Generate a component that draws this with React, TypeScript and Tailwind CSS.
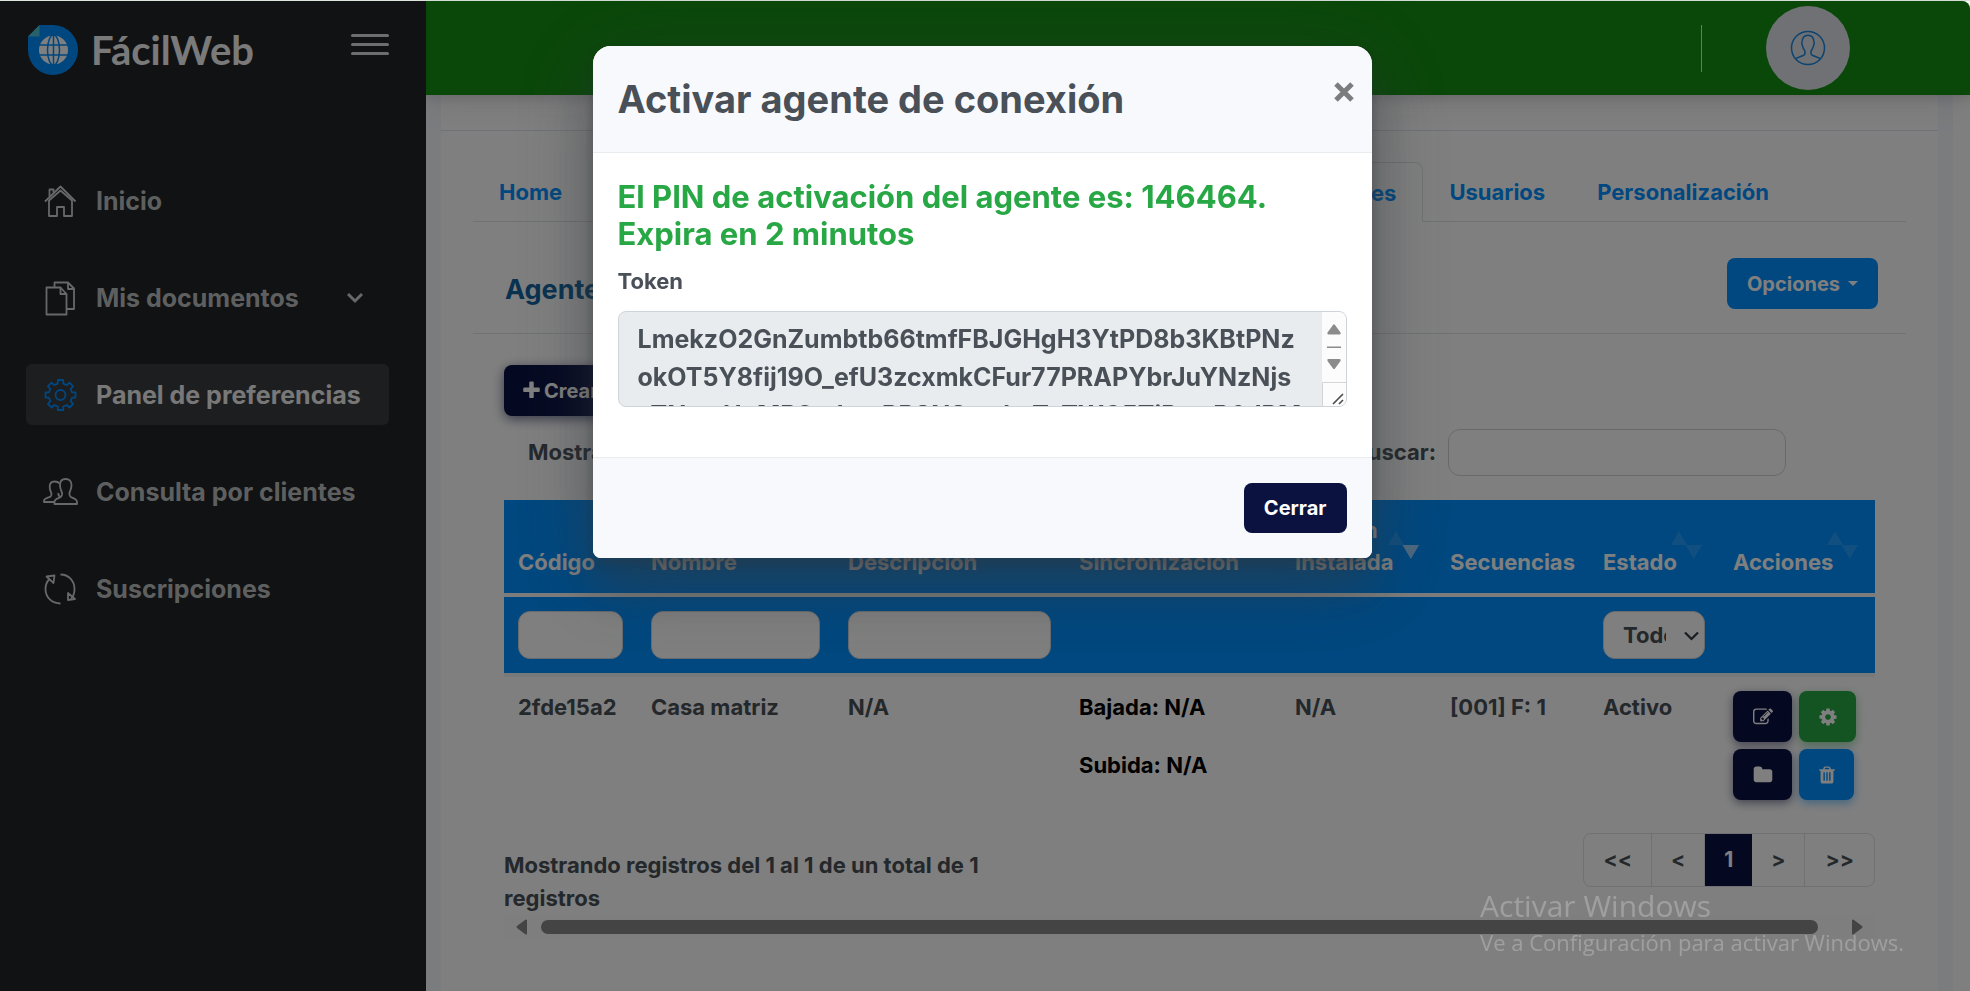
/**
 * Agents page of the preferences panel, with the activation modal open
 */

import { useState } from 'react';
import type { ReactNode } from 'react';

const TOKEN =
  'LmekzO2GnZumbtb66tmfFBJGHgH3YtPD8b3KBtPNzokOT5Y8fij19O_efU3zcxmkCFur77PRAPYbrJuYNzNjseTNuwHoMB3cdmpRR8N8pwhzTuTWC5TiPxwR6dRM48OlTQ';

// Font Awesome 4 glyphs, 1792 grid
const FA_PATHS = {
  plus: 'M1600 736v192q0 40-28 68t-68 28h-416v416q0 40-28 68t-68 28h-192q-40 0-68-28t-28-68v-416h-416q-40 0-68-28t-28-68v-192q0-40 28-68t68-28h416v-416q0-40 28-68t68-28h192q40 0 68 28t28 68v416h416q40 0 68 28t28 68z',
  edit: 'M888 1184l116-116-152-152-116 116v56h96v96h56zm440-720q-16-16-33 1l-350 350q-17 17-1 33t33-1l350-350q17-17 1-33zm80 594v190q0 119-84.500 203.500t-203.500 84.500h-832q-119 0-203.500-84.500t-84.500-203.500v-832q0-119 84.500-203.500t203.500-84.500h832q63 0 117 25 15 7 18 23 3 17-9 29l-49 49q-14 14-32 8-23-6-45-6h-832q-66 0-113 47t-47 113v832q0 66 47 113t113 47h832q66 0 113-47t47-113v-126q0-13 9-22l64-64q15-15 35-7t20 29zm-96-738l288 288-672 672h-288v-288zm444 132l-92 92-288-288 92-92q28-28 68-28t68 28l152 152q28 28 28 68t-28 68z',
  cog: 'M1152 896q0-106-75-181t-181-75-181 75-75 181 75 181 181 75 181-75 75-181zm512-109v222q0 12-8 23t-20 13l-185 28q-19 54-39 91 35 50 107 138 10 12 10 25t-9 23q-27 37-99 108t-94 71q-12 0-26-9l-138-108q-44 23-91 38-16 136-29 186-7 28-36 28h-222q-14 0-24.500-8.500t-11.500-21.500l-28-184q-49-16-90-37l-141 107q-10 9-25 9-14 0-25-11-126-114-165-168-7-10-7-23 0-12 8-23 15-21 51-66.500t54-70.500q-27-50-41-99l-183-27q-13-2-21-12.500t-8-23.500v-222q0-12 8-23t19-13l186-28q14-46 39-92-40-57-107-138-10-12-10-24 0-10 9-23 26-36 98.500-107.500t94.500-71.500q13 0 26 10l138 107q44-23 91-38 16-136 29-186 7-28 36-28h222q14 0 24.500 8.500t11.500 21.500l28 184q49 16 90 37l142-107q9-9 24-9 13 0 25 10 129 119 165 170 7 8 7 22 0 12-8 23-15 21-51 66.500t-54 70.500q26 50 41 98l183 28q13 2 21 12.500t8 23.500z',
  folder: 'M1728 608v704q0 92-66 158t-158 66h-1216q-92 0-158-66t-66-158v-960q0-92 66-158t158-66h320q92 0 158 66t66 158v32h672q92 0 158 66t66 158z',
  trash: 'M704 1376v-704q0-14-9-23t-23-9h-64q-14 0-23 9t-9 23v704q0 14 9 23t23 9h64q14 0 23-9t9-23zm256 0v-704q0-14-9-23t-23-9h-64q-14 0-23 9t-9 23v704q0 14 9 23t23 9h64q14 0 23-9t9-23zm256 0v-704q0-14-9-23t-23-9h-64q-14 0-23 9t-9 23v704q0 14 9 23t23 9h64q14 0 23-9t9-23zm-544-992h448l-48-117q-7-9-17-11h-317q-10 2-17 11zm928 32v64q0 14-9 23t-23 9h-96v948q0 83-47 143.500t-113 60.500h-832q-66 0-113-58.500t-47-141.500v-952h-96q-14 0-23-9t-9-23v-64q0-14 9-23t23-9h309l70-167q15-37 54-63t79-26h320q40 0 79 26t54 63l70 167h309q14 0 23 9t9 23z',
};

function FaIcon({ name, size = 20 }: { name: keyof typeof FA_PATHS; size?: number }) {
  return (
    <svg width={size} height={size} viewBox="0 0 1792 1792" fill="currentColor" aria-hidden="true">
      <path d={FA_PATHS[name]} />
    </svg>
  );
}

// Thin outline icons of the side menu
function LineIcon({ children }: { children: ReactNode }) {
  return (
    <svg
      width="36"
      height="36"
      viewBox="0 0 36 36"
      fill="none"
      stroke="currentColor"
      strokeWidth="1.8"
      strokeLinejoin="round"
      aria-hidden="true"
    >
      {children}
    </svg>
  );
}

const homeIcon = (
  <LineIcon>
    <path d="M3 18.500 18.500 3.500l15 15" />
    <path d="M7 17.500v15.500h8V24h7v9h8V17.500L18.500 7.500z" />
    <path d="M7.500 13.500V6.500h4v3" />
  </LineIcon>
);

const filesIcon = (
  <LineIcon>
    <path d="M4.500 7.500h14l6 6.500v20.500h-20z" />
    <path d="M18.500 7.500V14h6" />
    <path d="M12.500 7.500V2.500h13.500L32 8.500V29h-7.500" />
    <path d="M26 2.500v6.500h6" />
  </LineIcon>
);

const gearIcon = (
  <LineIcon>
    <circle cx="18.500" cy="18" r="5" />
    <path d="M15.800 3h5.400v3.600l3.600 1.500 2.700-2.500 3.600 3.700-2.500 2.700 1.500 3.400h3.400v5.200h-3.400l-1.500 3.600 2.500 2.600-3.600 3.700-2.700-2.500-3.600 1.500V33h-5.400v-3.500l-3.600-1.500-2.700 2.500-3.600-3.700 2.500-2.600-1.500-3.600H3.500v-5.200h3.400l1.500-3.400-2.500-2.700 3.600-3.700 2.700 2.500 3.600-1.500z" />
  </LineIcon>
);

const usersIcon = (
  <LineIcon>
    <path d="M23.500 5c-3.500 0-5.500 2.300-5.500 6 0 4 1.200 5.500 2 7.500.5 3-.3 4.300-2.500 5.200-3 1.200-5 1.800-5 4.300v2h22.500v-2c0-2.500-2-3.100-5-4.300-2.400-1-3-2.200-2.500-5.200.8-2 2-3.500 2-7.500 0-3.700-2-6-6-6z" />
    <path d="M17.500 9.500C16.500 8.200 14.500 7.500 12.500 7.500 9.500 7.500 7.700 9.500 7.700 12.700c0 3.400 1 4.700 1.600 6.400.5 2.600 0 3.200-2 4-3 1.100-5.300 1.700-5.300 3.800V28h10.500" />
    <path d="M16.500 19c-.6 2.300.4 3.200 2 3.800" />
  </LineIcon>
);

const refreshIcon = (
  <LineIcon>
    <path d="M18.500 3.500c8 0 14 6.200 14 14.500 0 4-1.200 7.500-3.500 10" />
    <path d="M26 22v7l7-1z" />
    <path d="M18.500 32.500C10 32.500 3.500 26.500 3.500 18c0-4 1.500-7.500 4-10" />
    <path d="M4.500 5.500l8-1-1 7.500z" />
  </LineIcon>
);

const menuItems = [
  { label: 'Inicio', icon: homeIcon },
  { label: 'Mis documentos', icon: filesIcon, hasChildren: true },
  { label: 'Panel de preferencias', icon: gearIcon, active: true },
  { label: 'Consulta por clientes', icon: usersIcon },
  { label: 'Suscripciones', icon: refreshIcon },
];

function Logo() {
  return (
    <a href="#" className="flex items-center gap-[13px]">
      <svg width="50" height="50" viewBox="0 0 50 50" aria-hidden="true">
        <path d="M11.500 0H26a25 25 0 1 1-26 25V11.500z" fill="#008cff" />
        <path d="M11.500 0v11.500H0z" fill="#4fc3d5" />
        <circle cx="25.500" cy="25" r="14.500" fill="#fff" />
        <g fill="none" stroke="#008cff" strokeWidth="1.500">
          <ellipse cx="25.500" cy="25" rx="6" ry="15" />
          <path d="M25.500 10v30M10 20h31M10 30h31" />
        </g>
      </svg>
      <span className="font-[Lato,sans-serif] text-[40px] leading-[50px] font-bold text-[#f4f4f4]">FácilWeb</span>
    </a>
  );
}

function Sidebar() {
  return (
    <aside className="relative z-20 w-[426px] shrink-0 bg-[#212428]">
      <div className="flex h-[94px] items-center justify-between pt-1 pr-[37px] pl-7">
        <Logo />
        <button type="button" aria-label="Menú" className="mb-3 flex w-[38px] flex-col gap-[6px]">
          <span className="h-[3px] rounded-full bg-[#dcdcdc]" />
          <span className="h-[3px] rounded-full bg-[#dcdcdc]" />
          <span className="h-[3px] rounded-full bg-[#dcdcdc]" />
        </button>
      </div>
      <nav className="mt-[75px] flex flex-col gap-9 pr-[37px] pl-[26px]">
        {menuItems.map(item => (
          <a
            key={item.label}
            href="#"
            className={`flex h-[61px] items-center gap-[18px] rounded-md pr-[26px] pl-4 text-[25px] leading-8 ${
              item.active ? 'bg-[#3a3c3f] text-[#f0f0f0]' : 'text-[#bdbebf]'
            }`}
          >
            <span className={item.active ? 'text-[#008cff]' : 'text-[#d0d1d2]'}>{item.icon}</span>
            <span className="flex-1">{item.label}</span>
            {item.hasChildren && (
              <svg width="16" height="16" viewBox="0 0 16 16" fill="none" stroke="#d0d1d2" strokeWidth="3" aria-hidden="true">
                <path d="M1 4l7 7 7-7" />
              </svg>
            )}
          </a>
        ))}
      </nav>
    </aside>
  );
}

function TopBar() {
  return (
    <header className="relative z-10 flex h-[94px] items-center justify-end gap-16 rounded-tr-lg bg-[#149012] pr-[120px] shadow-[0_8px_35px_rgba(4,9,20,0.08),0_4px_12px_rgba(4,9,20,0.12)]">
      <span className="h-[47px] w-px bg-[#e4e4e4]" />
      <button type="button" aria-label="Cuenta" className="flex size-[84px] items-center justify-center rounded-full bg-[#e0e3e8]">
        <svg width="36" height="36" viewBox="0 0 36 36" fill="none" stroke="#1a86e0" strokeWidth="1.500" aria-hidden="true">
          <circle cx="18" cy="18" r="16.500" />
          <path d="M5.800 29c1.500-1.600 4-2.400 7.500-3.500 1.800-.6 2-1.700 1.700-4.200-.6-1.600-2.300-3.300-2.500-5.500-.4-.8-.9-1.600-.6-3 .2-5 2.600-7.600 6.100-7.600s5.900 2.600 6.100 7.600c.3 1.400-.2 2.200-.6 3-.2 2.200-1.900 3.900-2.500 5.500-.3 2.500-.1 3.600 1.700 4.200 3.500 1.100 6 1.900 7.500 3.500" />
        </svg>
      </button>
    </header>
  );
}

function SortArrows({ desc = false }: { desc?: boolean }) {
  return (
    <svg
      width="31"
      height="28"
      viewBox="0 0 31 28"
      fill="#fff"
      className="absolute right-[17px] bottom-[34px]"
      aria-hidden="true"
    >
      <path d="M0 14 8 0l8 14z" fillOpacity="0.13" />
      <path d="M14.500 14h16.500l-8.200 14z" fillOpacity={desc ? 0.6 : 0.13} />
    </svg>
  );
}

const columns = [
  { label: 'Código', width: 133 },
  { label: 'Nombre', width: 197 },
  { label: 'Descripción', width: 231 },
  { label: 'Sincronización', width: 216 },
  { label: 'Versión Instalada', width: 155, sort: 'desc' },
  { label: 'Secuencias', width: 153 },
  { label: 'Estado', width: 130, sort: 'none' },
  { label: 'Acciones', width: 156, sort: 'none' },
];

const filterClass = 'block h-12 w-full rounded-xl border border-[#ced4da] bg-white';

function AgentsTable() {
  return (
    <table className="mt-6 w-full table-fixed border-collapse text-left">
      <colgroup>
        {columns.map(col => (
          <col key={col.label} style={{ width: col.width }} />
        ))}
      </colgroup>
      <thead className="bg-[#0090ff] text-white">
        <tr className="h-[95px]">
          {columns.map(col => (
            <th key={col.label} scope="col" className="relative px-[14px] pb-[15px] align-bottom leading-8">
              {col.label}
              {col.sort && <SortArrows desc={col.sort === 'desc'} />}
            </th>
          ))}
        </tr>
        <tr className="h-20 border-t-4 border-b-4 border-t-[#f8f9fa] border-b-[#f1f2f3]">
          <td className="px-[14px]"><input type="text" aria-label="Filtrar código" className={filterClass} /></td>
          <td className="px-[14px]"><input type="text" aria-label="Filtrar nombre" className={filterClass} /></td>
          <td className="px-[14px]"><input type="text" aria-label="Filtrar descripción" className={filterClass} /></td>
          <td />
          <td />
          <td />
          <td className="px-[14px]">
            <div className="relative">
              <select
                aria-label="Filtrar estado"
                className="block h-12 w-full appearance-none rounded-xl border border-[#ced4da] bg-white pr-[38px] pl-[19px] text-[#495057]"
              >
                <option>Todos</option>
                <option>Activo</option>
              </select>
              <svg
                width="15"
                height="10"
                viewBox="0 0 15 10"
                fill="none"
                stroke="#343a40"
                strokeWidth="2.200"
                className="pointer-events-none absolute top-5 right-[6px]"
                aria-hidden="true"
              >
                <path d="M1 1.500l6.500 6.500L14 1.500" />
              </svg>
            </div>
          </td>
          <td />
        </tr>
      </thead>
      <tbody>
        <tr className="align-top leading-[33px]">
          <td className="px-[14px] py-[14px]">2fde15a2</td>
          <td className="px-[14px] py-[14px]">Casa matriz</td>
          <td className="px-[14px] py-[14px]">N/A</td>
          <td className="px-[14px] py-[14px] text-black">
            <p className="mb-[25px]">Bajada: N/A</p>
            <p>Subida: N/A</p>
          </td>
          <td className="px-[14px] py-[14px]">N/A</td>
          <td className="px-[14px] py-[14px]">[001] F: 1</td>
          <td className="px-[14px] py-[14px]">Activo</td>
          <td className="px-[14px] py-[14px]">
            <div className="flex flex-wrap gap-[7px] text-white">
              <button type="button" aria-label="Editar" className="flex h-[51px] w-[59px] items-center justify-center rounded-lg bg-[#0a1142] shadow-[0_3px_10px_rgba(10,17,66,0.5)]">
                <FaIcon name="edit" />
              </button>
              <button type="button" aria-label="Configurar" className="flex h-[51px] w-[57px] items-center justify-center rounded-lg bg-[#28a745] shadow-[0_3px_10px_rgba(40,167,69,0.5)]">
                <FaIcon name="cog" />
              </button>
              <button type="button" aria-label="Archivos" className="flex h-[51px] w-[59px] items-center justify-center rounded-lg bg-[#0a1142] shadow-[0_3px_10px_rgba(10,17,66,0.5)]">
                <FaIcon name="folder" />
              </button>
              <button type="button" aria-label="Eliminar" className="flex h-[51px] w-[55px] items-center justify-center rounded-lg bg-[#0090ff] shadow-[0_3px_10px_rgba(0,144,255,0.5)]">
                <FaIcon name="trash" />
              </button>
            </div>
          </td>
        </tr>
      </tbody>
    </table>
  );
}

function Pagination() {
  const pageClass = 'flex h-[52px] items-center border-r border-[#dee2e6] px-[19px]';
  return (
    <nav aria-label="Páginas" className="flex overflow-hidden rounded-lg border border-[#dee2e6] text-[21px]">
      <button type="button" className={pageClass}>&lt;&lt;</button>
      <button type="button" className={pageClass}>&lt;</button>
      <button type="button" aria-current="page" className="flex h-[52px] items-center bg-[#0a1142] px-[19px] text-white">1</button>
      <button type="button" className={pageClass}>&gt;</button>
      <button type="button" className="flex h-[52px] items-center px-5">&gt;&gt;</button>
    </nav>
  );
}

function HorizontalScroll() {
  return (
    <div className="flex h-[23px] items-center bg-[#fcfcfc] px-3 text-[#888]">
      <svg width="12" height="16" viewBox="0 0 12 16" fill="currentColor" aria-hidden="true">
        <path d="M11 1v14q-1 1-2 0L1 9q-1-1 0-2L9 1q1-1 2 0z" />
      </svg>
      <span className="mr-[33px] ml-[13px] h-[14px] flex-1 rounded-full bg-[#888]" />
      <svg width="12" height="16" viewBox="0 0 12 16" fill="currentColor" aria-hidden="true">
        <path d="M1 1v14q1 1 2 0l8-6q1-1 0-2L3 1Q2 0 1 1z" />
      </svg>
    </div>
  );
}

function AgentsPage() {
  const tabClass = 'block h-[59px] px-[26px] leading-[60px]';
  return (
    <main className="flex-1 border-r-[17px] border-white bg-[#f5f8fd] px-[15px]">
      <div className="min-h-full bg-white">
        <div className="h-9 border-b border-[#dfe6f0]" />
        <div className="px-8 pt-[31px]">
          <ul className="flex border-b border-[#dee2e6] pr-[111px] text-[#0090ff]">
            <li><a href="#" className={tabClass}>Home</a></li>
            <li className="-mb-px ml-auto rounded-t-lg border border-b-0 border-[#dee2e6] bg-white">
              <a href="#" className={tabClass}>Agentes</a>
            </li>
            <li><a href="#" className={tabClass}>Usuarios</a></li>
            <li><a href="#" className={tabClass}>Personalización</a></li>
          </ul>
          <div className="flex items-end justify-between border-b border-[#dee6e9] pt-9 pr-7 pb-6 pl-8">
            <h1 className="text-[27px] leading-[39px] text-[#11659f]">Agentes</h1>
            <button type="button" className="flex h-[51px] items-center gap-2 rounded-lg bg-[#0090ff] px-5 text-[20px] text-white">
              Opciones
              <svg width="10" height="5" viewBox="0 0 10 5" fill="currentColor" aria-hidden="true">
                <path d="M0 0h10L5 5z" />
              </svg>
            </button>
          </div>
          <div className="px-[31px] pt-[31px]">
            <button type="button" className="flex h-[51px] items-center gap-[2px] rounded-lg bg-[#0a1142] px-[17px] text-[20px] text-white shadow-[0_3px_12px_rgba(10,17,66,0.6)]">
              <FaIcon name="plus" size={21} />
              Crear
            </button>
            <div className="mt-[13px] flex items-center justify-between pr-[89px] pl-6">
              <span>Mostrar</span>
              <label className="flex items-center gap-3">
                Buscar:
                <input type="search" className="h-[47px] w-[338px] rounded-xl border border-[#ced4da] bg-white" />
              </label>
            </div>
            <AgentsTable />
            <div className="mt-[19px] flex items-start justify-between">
              <p className="w-5/12 pt-4 leading-[33px]">Mostrando registros del 1 al 1 de un total de 1 registros</p>
              <Pagination />
            </div>
            <HorizontalScroll />
          </div>
        </div>
      </div>
    </main>
  );
}

function ActivationModal({ onClose }: { onClose: () => void }) {
  return (
    <div className="fixed inset-x-0 top-px bottom-0 z-40 flex items-start justify-center rounded-tr-lg bg-black/50 pt-[45px] pr-1.5">
      <div
        role="dialog"
        aria-modal="true"
        aria-labelledby="activation-title"
        className="w-[779px] max-w-full overflow-hidden rounded-t-[18px] rounded-b-lg bg-white shadow-[0_18px_80px_rgba(52,58,64,0.4),0_32px_41px_rgba(52,58,64,0.3),0_13px_13px_rgba(0,0,0,0.05),0_5px_10px_rgba(52,58,64,0.3)]"
      >
        {/* Header */}
        <div className="flex items-start justify-between border-b border-[#e9ecef] bg-[#f8f9fc] pt-[26px] pr-[18px] pb-[25px] pl-[25px]">
          <h2 id="activation-title" className="text-[38px] leading-[55px]">Activar agente de conexión</h2>
          <button type="button" aria-label="Cerrar ventana" onClick={onClose} className="mt-[10px]">
            <svg width="20" height="20" viewBox="0 0 20 20" stroke="#7b7c7e" strokeWidth="5" aria-hidden="true">
              <path d="M2 2l16 16M18 2 2 18" />
            </svg>
          </button>
        </div>

        {/* Content */}
        <div className="px-[25px] pt-[25px] pb-[50px]">
          <p className="text-[31px] leading-[37px] text-[#28a745]">
            El PIN de activación del agente es: 146464.
            <br />
            Expira en 2 minutos
          </p>
          <label htmlFor="token" className="mt-[13px] block leading-[33px]">Token</label>
          <div className="mt-[13px] flex h-24 overflow-hidden rounded-lg border border-[#ced4da] bg-[#e9ecef]">
            <textarea
              id="token"
              readOnly
              defaultValue={TOKEN}
              className="min-w-0 flex-1 resize-none overflow-hidden bg-transparent pt-2 pr-5 pl-[19px] text-[25px] leading-[38px] break-all outline-none"
            />
            <div className="flex w-6 flex-col bg-[#fcfcfc]">
              <svg width="24" height="70" viewBox="0 0 24 70" fill="#8b8b8b" aria-hidden="true">
                <path d="M5.500 20.500 11 13q1-1.500 2 0l5.500 7.500q.8 2-1 2h-11q-1.800 0-1-2zM5 34.500h14v1.500H5zM5.500 49 11 56.500q1 1.500 2 0l5.500-7.500q.8-2-1-2h-11q-1.800 0-1 2z" />
              </svg>
              <svg width="24" height="24" viewBox="0 0 24 24" fill="none" aria-hidden="true">
                <path d="M.5 24V.5H24" stroke="#d5d5d5" />
                <path d="M11 22 21 12M17 22l4-4" stroke="#4a4a4a" strokeWidth="1.600" />
              </svg>
            </div>
          </div>
        </div>

        {/* Footer */}
        <div className="flex justify-end border-t border-[#e9ecef] bg-[#f8f9fc] p-[25px]">
          <button type="button" onClick={onClose} className="h-[50px] rounded-lg bg-[#0b123f] px-5 text-[20px] text-white">
            Cerrar
          </button>
        </div>
      </div>
    </div>
  );
}

export default function App() {
  const [modalOpen, setModalOpen] = useState(true);

  return (
    <div className="flex min-h-screen border-t border-[#dfe6e0] bg-white font-[Inter,sans-serif] text-[22px] font-bold text-[#495057]">
      <Sidebar />
      <div className="flex min-w-0 flex-1 flex-col">
        <TopBar />
        <AgentsPage />
      </div>

      {modalOpen && <ActivationModal onClose={() => setModalOpen(false)} />}

      {/* System activation notice */}
      <div className="pointer-events-none fixed right-[66px] bottom-8 z-50 font-[Open_Sans,sans-serif] font-normal text-white/25">
        <p className="text-[30px] leading-[38px]">Activar Windows</p>
        <p className="text-[22px] leading-[34px]">Ve a Configuración para activar Windows.</p>
      </div>
    </div>
  );
}
